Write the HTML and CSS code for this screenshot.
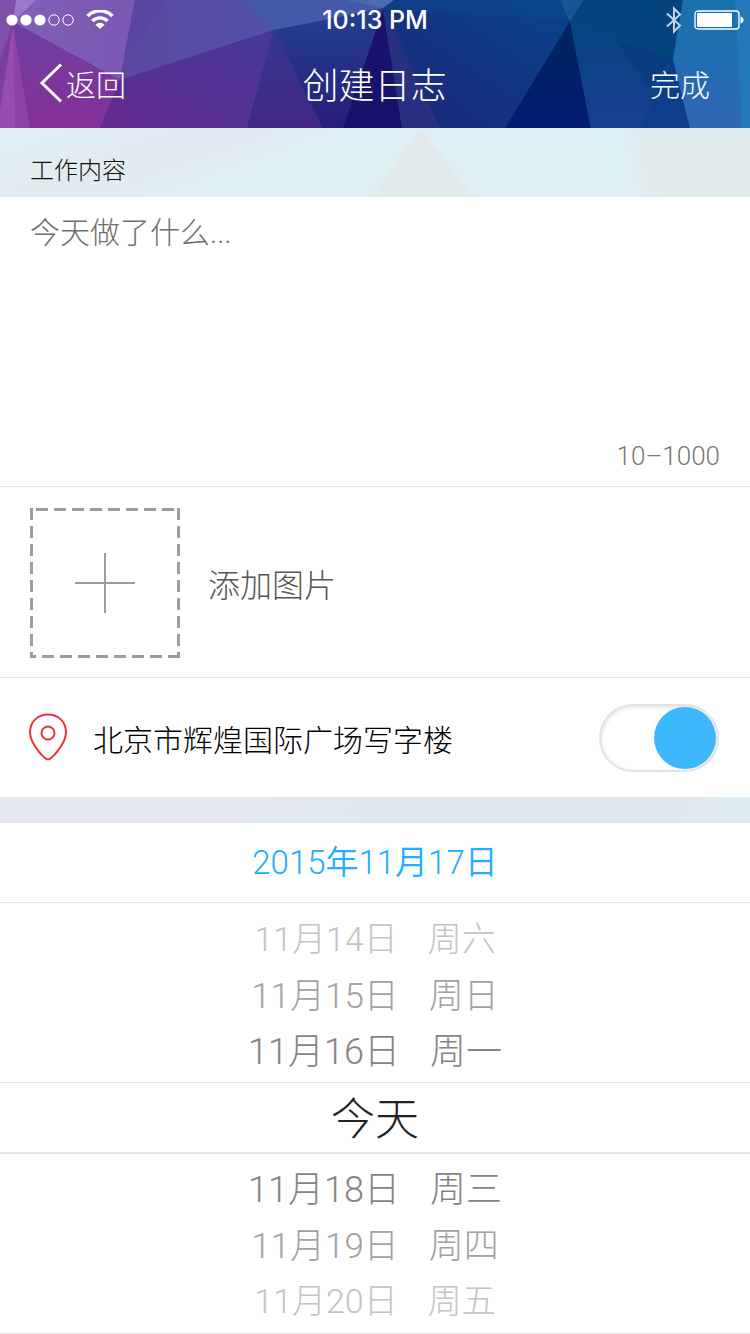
FILE: index.html
```html
<!DOCTYPE html>
<html lang="zh-CN">
<head>
  <meta charset="UTF-8" />
  <meta name="viewport" content="width=device-width, initial-scale=1.0" />
  <title>创建日志</title>
  <link rel="stylesheet" href="styles.css">
</head>

<body>

  <header class="top">
    <svg class="top-bg" viewBox="0 0 750 128" preserveAspectRatio="none" aria-hidden="true">
      <defs>
        <linearGradient id="base" x1="0" y1="0" x2="1" y2="0">
          <stop offset="0" stop-color="#7b3f9f" />
          <stop offset="0.3" stop-color="#3f3391" />
          <stop offset="0.6" stop-color="#123583" />
          <stop offset="1" stop-color="#2468ad" />
        </linearGradient>
        <linearGradient id="violet" x1="0" y1="0" x2="1" y2="0">
          <stop offset="0" stop-color="#8160b8" />
          <stop offset="1" stop-color="#7a58b1" />
        </linearGradient>
        <linearGradient id="plum" x1="0" y1="0" x2="0" y2="1">
          <stop offset="0" stop-color="#6d419f" />
          <stop offset="1" stop-color="#862f98" />
        </linearGradient>
        <linearGradient id="sky" x1="0" y1="0" x2="1" y2="0">
          <stop offset="0" stop-color="#5c48a0" />
          <stop offset="0.5" stop-color="#5250a6" />
          <stop offset="1" stop-color="#4456a6" />
        </linearGradient>
        <linearGradient id="grape" x1="0" y1="1" x2="1" y2="0">
          <stop offset="0" stop-color="#622a8e" />
          <stop offset="1" stop-color="#45399a" />
        </linearGradient>
        <linearGradient id="indigo" x1="0" y1="0" x2="0" y2="1">
          <stop offset="0" stop-color="#33378f" />
          <stop offset="1" stop-color="#432682" />
        </linearGradient>
        <linearGradient id="navy" x1="0" y1="0" x2="0" y2="1">
          <stop offset="0" stop-color="#223f91" />
          <stop offset="1" stop-color="#281e7a" />
        </linearGradient>
        <linearGradient id="blue" x1="1" y1="0" x2="0" y2="1">
          <stop offset="0" stop-color="#07458a" />
          <stop offset="1" stop-color="#1e257a" />
        </linearGradient>
        <linearGradient id="spike" x1="0" y1="0" x2="0" y2="1">
          <stop offset="0" stop-color="#00265c" />
          <stop offset="1" stop-color="#031b72" />
        </linearGradient>
        <linearGradient id="ocean" x1="0" y1="0" x2="0" y2="1">
          <stop offset="0" stop-color="#04457f" />
          <stop offset="1" stop-color="#183f92" />
        </linearGradient>
        <linearGradient id="azure" x1="0" y1="0" x2="0" y2="1">
          <stop offset="0" stop-color="#1673ae" />
          <stop offset="1" stop-color="#2e66b4" />
        </linearGradient>
      </defs>
      <rect width="750" height="128" fill="url(#base)" />
      <path d="M0 0H16L13 22L0 60Z" fill="#7f50a8" />
      <path d="M16 0H37L13 22Z" fill="#9a7acb" />
      <path d="M13 26L0 110V128H30Z" fill="#984bb1" />
      <path d="M13 26L15 128H30Z" fill="#8e42a7" />
      <path d="M36 0H135L120 80L13 22Z" fill="url(#violet)" />
      <path d="M13 22L120 80L100 128H30Z" fill="url(#plum)" />
      <path d="M135 0H383V8L274 30L120 80Z" fill="url(#sky)" />
      <path d="M135 0H168L123 63L120 80Z" fill="#5a45a0" />
      <path d="M240 0H345L383 8L274 30Z" fill="#4559a9" />
      <path d="M345 0H394L383 8Z" fill="#4b6ab0" />
      <path d="M120 80L274 30L247 128H100Z" fill="url(#grape)" />
      <path d="M120 80L138 128H100Z" fill="#662b90" opacity="0.6" />
      <path d="M274 30L323 128H247Z" fill="url(#indigo)" />
      <path d="M274 30L383 10L343 128H323Z" fill="url(#navy)" />
      <path d="M394 0H560L570 21L505 128H440L388 14L383 10Z" fill="url(#blue)" />
      <path d="M383 10L402 128H343Z" fill="#17126c" />
      <path d="M386 14L402 128H440Z" fill="#28307f" />
      <path d="M385 10L394 0H560L570 21L460 14Z" fill="#0b468b" opacity="0.6" />
      <path d="M560 0H584L570 21Z" fill="#155792" />
      <path d="M584 0H685L673 59L570 21Z" fill="#04447c" />
      <path d="M570 21L591 128H505Z" fill="url(#spike)" />
      <path d="M570 21L673 59L690 128H591Z" fill="url(#ocean)" />
      <path d="M615 38L673 59L650 90Z" fill="#04377a" opacity="0.5" />
      <path d="M673 59L690 128H640Z" fill="#083a86" opacity="0.5" />
      <path d="M683 0H735L742 128H690L673 59Z" fill="url(#azure)" />
      <path d="M735 0H750V128H742Z" fill="#2278b8" />
    </svg>

    <div class="status">
      <div class="status-left">
        <svg width="68" height="12" viewBox="0 0 68 12" aria-hidden="true">
          <g fill="#fff">
            <circle cx="6" cy="6" r="5.6" />
            <circle cx="20" cy="6" r="5.6" />
            <circle cx="34" cy="6" r="5.6" />
          </g>
          <g fill="none" stroke="#fff">
            <circle cx="48" cy="6" r="5.2" />
            <circle cx="62" cy="6" r="5.2" />
          </g>
        </svg>
        <svg width="28" height="20" viewBox="0 0 28 20" aria-hidden="true">
          <g fill="none" stroke="#fff" stroke-width="3.4">
            <path d="M1.6 6A17.6 17.6 0 0 1 26.4 6" />
            <path d="M6.4 11A10.8 10.8 0 0 1 21.6 11" />
          </g>
          <path d="M9.4 14.8A6.4 6.4 0 0 1 18.6 14.8L14 19Z" fill="#fff" />
        </svg>
      </div>
      <span class="clock">10:13 PM</span>
      <div class="status-right">
        <svg width="16" height="28" viewBox="0 0 16 28" fill="none" stroke="#c3d3e6" stroke-width="2" aria-hidden="true">
          <path d="M1 7.500L14 19.500L8 25.500V2.500L14 8.500L1 20.500" />
        </svg>
        <svg width="50" height="20" viewBox="0 0 50 20" aria-hidden="true">
          <rect x="1" y="1" width="44" height="18" rx="3" fill="none" stroke="#fff" stroke-width="1.300" />
          <rect x="3" y="3" width="35" height="14" rx="1" fill="#fff" />
          <path d="M46.500 6.500Q49.500 7.500 49.500 10T46.500 13.500Z" fill="#fff" />
        </svg>
      </div>
    </div>

    <nav class="nav">
      <a href="#" class="back">
        <svg width="24" height="40" viewBox="0 0 24 40" fill="none" stroke="#fff" stroke-width="3" aria-hidden="true">
          <path d="M22 1.500L3 20L22 38.500" />
        </svg>返回</a>
      <h1>创建日志</h1>
      <button type="button" class="done">完成</button>
    </nav>
  </header>

  <form class="form-container">
    <label class="band" for="content">工作内容</label>

    <div class="content">
      <textarea id="content" maxlength="1000" placeholder="今天做了什么..."></textarea>
      <span class="limit">10–1000</span>
    </div>

    <div class="photo">
      <button type="button" class="add-photo">
        <svg width="150" height="150" viewBox="0 0 150 150" fill="none" stroke="#9d9d9d" aria-hidden="true">
          <g stroke-width="3" stroke-dasharray="12 6">
            <path d="M1.500 0V150" />
            <path d="M148.500 0V150" />
            <path d="M6 1.500H147" />
            <path d="M0 148.500H150" stroke-dashoffset="6" />
          </g>
          <path d="M45 75H105M75 45V105" stroke-width="2" />
        </svg>
        添加图片
      </button>
    </div>

    <div class="location">
      <svg width="40" height="50" viewBox="0 1 40 50" fill="none" stroke="#f03238" stroke-width="2" aria-hidden="true">
        <path d="M20 47.500C17 47.500 2 32 2 20.500C2 9.500 10 2.500 20 2.500S38 9.500 38 20.500C38 32 23 47.500 20 47.500Z" />
        <circle cx="20" cy="21" r="6.500" />
      </svg>
      <label for="share">北京市辉煌国际广场写字楼</label>
      <input type="checkbox" id="share" class="switch" checked />
    </div>

    <div class="divider"></div>

    <h2 class="date">2015年11月17日</h2>

    <!-- Date wheel -->
    <div class="wheel">
      <div class="wheel-before">
        <button type="button" class="day far"><span>11月14日</span><span>周六</span></button>
        <button type="button" class="day mid"><span>11月15日</span><span>周日</span></button>
        <button type="button" class="day near"><span>11月16日</span><span>周一</span></button>
      </div>
      <button type="button" class="day today">今天</button>
      <div class="wheel-after">
        <button type="button" class="day near"><span>11月18日</span><span>周三</span></button>
        <button type="button" class="day mid"><span>11月19日</span><span>周四</span></button>
        <button type="button" class="day far"><span>11月20日</span><span>周五</span></button>
      </div>
    </div>
  </form>

</body>
</html>
```
FILE: styles.css
```css
* {
  box-sizing: border-box;
}
body {
  margin: 0;
  background: #fff;
  color: #111;
  font-family: Roboto, "Noto Sans CJK SC", sans-serif;
  font-size: 30px;
  font-weight: 300;
}
button, textarea {
  font: inherit;
  color: inherit;
  background: none;
  border: 0;
  padding: 0;
}
svg {
  display: block;
  flex: none;
}

/* Header */
.top {
  position: relative;
  height: 128px;
  color: #fff;
}
.top-bg {
  position: absolute;
  inset: 0;
  width: 100%;
  height: 100%;
  z-index: -1;
}
.status, .nav {
  display: grid;
  grid-template-columns: 1fr auto 1fr;
  align-items: center;
}
.status {
  height: 40px;
  padding: 0 6px;
}
.status-left, .status-right {
  display: flex;
  align-items: center;
  gap: 12px;
}
.status-right {
  justify-content: flex-end;
}
.clock {
  font-family: Inter, sans-serif;
  font-size: 25px;
  font-weight: 500;
}
.nav {
  height: 86px;
  padding: 0 40px 0 39px;
}
.back {
  display: flex;
  align-items: center;
  gap: 3px;
  color: inherit;
  text-decoration: none;
}
.nav h1 {
  margin: 0;
  font-size: 36px;
  font-weight: 300;
}
.done {
  justify-self: end;
}

/* Form */
.band {
  display: block;
  height: 69px;
  padding: 17px 30px 0;
  font-size: 24px;
  line-height: 52px;
  background:
    linear-gradient(75deg, transparent 83%, #e2eaec 86%),
    conic-gradient(from 146deg at 56% 0, #e2eaec 0 66deg, transparent 72deg 352deg, #e2eaec),
    linear-gradient(160deg, #e0f0f5 8%, #e3ebf0 20%, #e2ebef 28%, #e0f1f6 38%);
}
.content {
  display: flex;
  flex-direction: column;
  height: 290px;
  padding: 13px 30px 12px;
  border-bottom: 1px solid #e6e6e6;
}
.content textarea {
  flex: 1;
  width: 100%;
  line-height: 46px;
  resize: none;
  outline: none;
}
.content textarea::placeholder {
  color: #6e6e6e;
  opacity: 1;
}
.limit {
  align-self: flex-end;
  color: #777;
  font-size: 26px;
  line-height: 36px;
}
.photo {
  padding: 21px 30px 19px;
  border-bottom: 1px solid #e6e6e6;
}
.add-photo {
  display: flex;
  align-items: center;
  gap: 28px;
  color: #555;
  font-size: 32px;
}
.location {
  display: flex;
  align-items: center;
  height: 119px;
  padding: 0 31px 0 28px;
}
.location label {
  flex: 1;
  margin-left: 25px;
  color: #000;
}
.switch {
  appearance: none;
  display: flex;
  justify-content: flex-end;
  width: 120px;
  height: 68px;
  margin: 0;
  padding: 1px;
  border: 2px solid #e2e2e2;
  border-radius: 34px;
  box-shadow: inset 0 1px 4px #ddd;
}
.switch::before {
  content: "";
  width: 62px;
  height: 62px;
  border-radius: 50%;
  background: #3db8ff;
}
.switch:not(:checked) {
  justify-content: flex-start;
}
.divider {
  height: 26px;
  background: linear-gradient(100deg, #e6e9f2 30%, #e0e8ef 50%, #e0e8ee 90%, #e0ecf3 96%);
}

/* Date picker */
.date {
  margin: 0;
  height: 80px;
  border-bottom: 1px solid #e6e6e6;
  color: #22adff;
  font-size: 33px;
  font-weight: 350;
  line-height: 80px;
  text-align: center;
}
.wheel {
  border-bottom: 1px solid #e6e6e6;
}
.wheel-before {
  padding: 5px 0 6px;
}
.wheel-after {
  padding: 4px 0 7px;
}
.day {
  display: flex;
  align-items: center;
  justify-content: center;
  gap: 30px;
  width: 100%;
  height: 56px;
}
.near {
  color: #848484;
  font-size: 36px;
}
.mid {
  color: #a2a2a2;
  font-size: 35px;
}
.far {
  color: #c4c4c4;
  font-size: 34px;
}
.today {
  height: 72px;
  padding-bottom: 4px;
  border-top: 1px solid #e6e6e6;
  border-bottom: 2px solid #e6e6e6;
  color: #222;
  font-size: 44px;
}
```
